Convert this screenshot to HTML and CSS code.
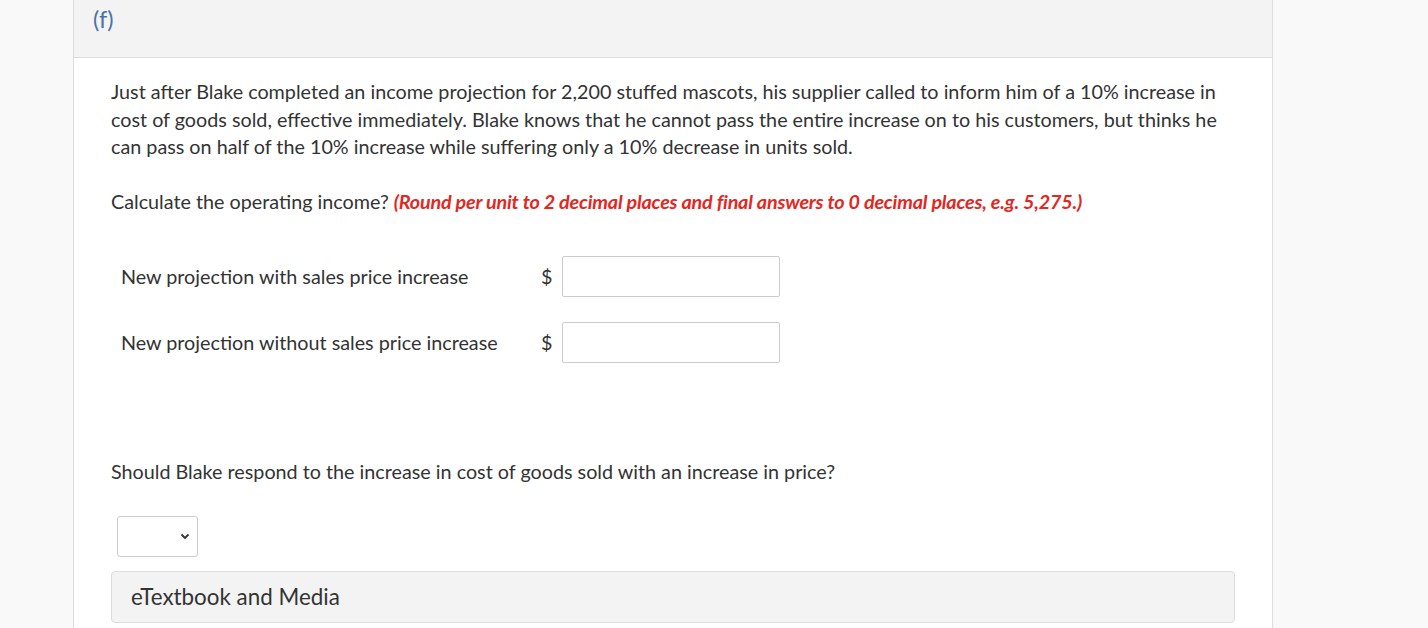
FILE: index.html
```html
<!DOCTYPE html>
<html lang="en">
<head>
<meta charset="utf-8">
<title>Question (f)</title>
<link rel="stylesheet" href="styles.css">
</head>
<body>
<div class="panel">
  <div class="panel-header"><span class="part-label">(f)</span></div>
  <div class="panel-body">
    <p class="para">Just after Blake completed an income projection for 2,200 stuffed mascots, his supplier called to inform him of a 10% increase in cost of goods sold, effective immediately. Blake knows that he cannot pass the entire increase on to his customers, but thinks he can pass on half of the 10% increase while suffering only a 10% decrease in units sold.</p>
    <p class="para">Calculate the operating income? <span class="hint">(Round per unit to 2 decimal places and final answers to 0 decimal places, e.g. 5,275.)</span></p>
    <div class="answer-table">
      <div class="answer-row">
        <span class="answer-label">New projection with sales price increase</span>
        <span class="currency">$</span>
        <input class="answer-input" type="text">
      </div>
      <div class="answer-row">
        <span class="answer-label">New projection without sales price increase</span>
        <span class="currency">$</span>
        <input class="answer-input" type="text">
      </div>
    </div>
    <p class="para question">Should Blake respond to the increase in cost of goods sold with an increase in price?</p>
    <div class="select-wrap">
      <select class="answer-select"><option></option><option>Yes</option><option>No</option></select>
      <svg class="chevron" width="10" height="7" viewBox="0 0 10 7"><path d="M1.5 1.5 L5 5 L8.5 1.5" fill="none" stroke="#333" stroke-width="1.8"/></svg>
    </div>
    <div class="media-bar">eTextbook and Media</div>
  </div>
</div>
</body>
</html>
```
FILE: styles.css
```css
html, body {
  margin: 0;
  padding: 0;
}
body {
  background: #f9f9f9;
  font-family: Lato, "Open Sans", sans-serif;
  color: #333;
}
.panel {
  margin-left: 73px;
  width: 1198px;
  min-height: 628px;
  background: #fff;
  border-left: 1px solid #ddd;
  border-right: 1px solid #ddd;
}
.panel-header {
  height: 58px;
  background: #f3f3f3;
  border-bottom: 1px solid #ddd;
  padding-left: 19px;
  box-sizing: border-box;
}
.part-label {
  display: inline-block;
  margin-top: 4px;
  font-size: 23.5px;
  line-height: 30px;
  color: #4a72aa;
}
.panel-body {
  padding: 20px 37px 0 37px;
}
.para {
  margin: 0 0 27px 0;
  font-size: 19.75px;
  line-height: 27.5px;
}
.hint {
  color: #e2281f;
  font-weight: bold;
  font-style: italic;
  letter-spacing: -0.2px;
}
.answer-table {
  display: flex;
  flex-direction: column;
  gap: 25px;
  padding-left: 10px;
  margin-top: 41px;
}
.answer-row {
  display: flex;
  align-items: center;
  height: 41px;
}
.answer-label {
  width: 420px;
  font-size: 19.75px;
}
.currency {
  width: 21px;
  font-size: 19.75px;
}
.answer-input {
  width: 218px;
  height: 41px;
  box-sizing: border-box;
  border: 1px solid #ccc;
  border-radius: 2px;
  margin: 0;
  padding: 0 6px;
  font-family: inherit;
  font-size: 16px;
}
.question {
  margin-top: 95px;
  margin-bottom: 30px;
}
.select-wrap {
  position: relative;
  width: 81px;
  height: 41px;
  margin-left: 6px;
}
.answer-select {
  appearance: none;
  -webkit-appearance: none;
  width: 81px;
  height: 41px;
  border: 1px solid #ccc;
  border-radius: 3px;
  background: #fff;
  margin: 0;
  font-family: inherit;
  font-size: 16px;
}
.chevron {
  position: absolute;
  right: 8px;
  top: 17px;
  pointer-events: none;
}
.media-bar {
  margin-top: 14px;
  height: 52px;
  box-sizing: border-box;
  background: #f3f3f3;
  border: 1px solid #ddd;
  border-radius: 4px;
  padding-left: 19px;
  display: flex;
  align-items: center;
  font-size: 22.4px;
  color: #333;
}
```
